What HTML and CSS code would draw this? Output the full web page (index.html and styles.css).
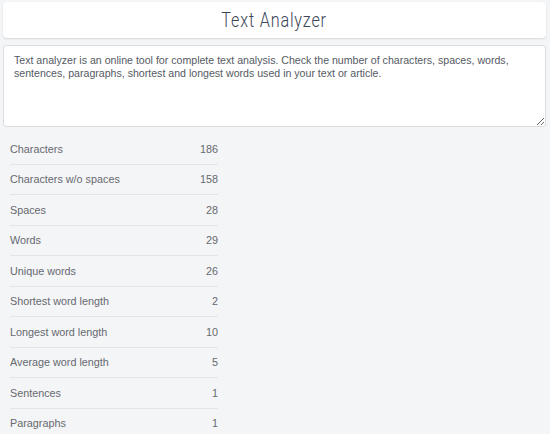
FILE: index.html
```html
<!DOCTYPE html>
<html>
<head>
<meta charset="utf-8">
<link rel="stylesheet" href="styles.css">
</head>
<body>
<div class="page">
  <header class="header"><h1 class="title">Text Analyzer</h1></header>
  <textarea class="input">Text analyzer is an online tool for complete text analysis. Check the number of characters, spaces, words, sentences, paragraphs, shortest and longest words used in your text or article.</textarea>
  <ul class="stats">
    <li class="row"><span>Characters</span><span>186</span></li>
    <li class="row"><span>Characters w/o spaces</span><span>158</span></li>
    <li class="row"><span>Spaces</span><span>28</span></li>
    <li class="row"><span>Words</span><span>29</span></li>
    <li class="row"><span>Unique words</span><span>26</span></li>
    <li class="row"><span>Shortest word length</span><span>2</span></li>
    <li class="row"><span>Longest word length</span><span>10</span></li>
    <li class="row"><span>Average word length</span><span>5</span></li>
    <li class="row"><span>Sentences</span><span>1</span></li>
    <li class="row"><span>Paragraphs</span><span>1</span></li>
  </ul>
</div>
</body>
</html>
```

FILE: styles.css
```css
html, body {
  margin: 0;
  padding: 0;
  background: #f4f5f7;
  font-family: "Liberation Sans", Arial, sans-serif;
  overflow: hidden;
}
.page {
  padding: 2px 4px 0 3px;
  display: flex;
  flex-direction: column;
}
.header {
  background: #fff;
  border-radius: 4px;
  box-shadow: 0 1px 2px rgba(0,0,0,0.12);
  height: 36px;
  display: flex;
  align-items: center;
  justify-content: center;
}
.title {
  margin: 0;
  font-family: "Roboto", "Liberation Sans", sans-serif;
  font-weight: 300;
  font-size: 20px;
  letter-spacing: 1px;
  color: #3b4658;
  transform: scaleX(0.81);
}
.input {
  margin-top: 7px;
  height: 82px;
  box-sizing: border-box;
  border: 1px solid #dcdde0;
  border-radius: 3px;
  background: #fff;
  padding: 8px 10px 7px;
  font-family: "Liberation Sans", Arial, sans-serif;
  font-size: 10.6px;
  line-height: 13px;
  color: #555a63;
  resize: vertical;
  outline: none;
}
.stats {
  list-style: none;
  margin: 7px 0 0 7px;
  padding: 0;
  width: 208px;
}
.row {
  display: flex;
  justify-content: space-between;
  align-items: center;
  height: 29.5px;
  border-bottom: 1px solid #e3e4e7;
  font-size: 10.8px;
  color: #66696f;
}
```
